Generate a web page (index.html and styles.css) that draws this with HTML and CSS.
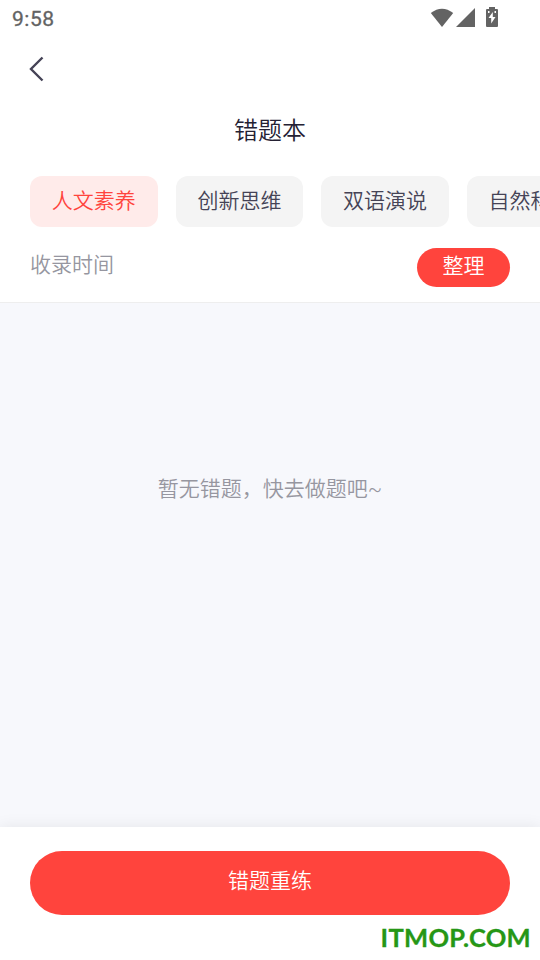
FILE: index.html
```html
<!DOCTYPE html>
<html lang="zh-CN">
<head>
<meta charset="utf-8">
<title>错题本</title>
<link rel="stylesheet" href="styles.css">
</head>
<body>
<div class="app">
  <div class="status">
    <span class="time">9:58</span>
    <div class="status-icons">
      <svg width="24" height="20" viewBox="0 0 24 20"><path d="M12 19 .8 5Q12-3.600 23.200 5Z"/></svg>
      <svg width="20" height="20" viewBox="0 0 20 20"><path d="M0 19 19 0V19Z"/></svg>
      <svg class="battery" width="12" height="20" viewBox="0 0 12 20"><path fill-rule="evenodd" d="M3 0h6v2H11q1 0 1 1v16q0 1-1 1H1q-1 0-1-1V3q0-1 1-1h2ZM2 4v2h1.500V4ZM8.500 4v2H10V4ZM6.800 5 2.500 11h2.700v5.500L9.500 10H6.800Z"/></svg>
    </div>
  </div>
  <nav class="nav"><svg width="16" height="26" viewBox="0 0 16 26"><path d="M14.500 1.500 3 13 14.500 24.500"/></svg></nav>
  <h1 class="title">错题本</h1>
  <div class="tabs">
    <div class="tab active">人文素养</div>
    <div class="tab">创新思维</div>
    <div class="tab">双语演说</div>
    <div class="tab">自然科学</div>
  </div>
  <div class="filter"><span class="sort">收录时间</span><button class="organize">整理</button></div>
  <main class="empty">暂无错题，快去做题吧<span class="tilde">~</span></main>
  <footer class="footer"><button class="retry">错题重练</button><div class="mark">ITMOP.COM</div></footer>
</div>
</body>
</html>
```
FILE: styles.css
```css
* { box-sizing: border-box; }
body { margin: 0; font-family: "Noto Sans CJK SC", sans-serif; font-size: 21px; font-weight: 350; }
.app { width: 540px; height: 960px; display: flex; flex-direction: column; overflow: hidden; background: #fff; }
.status { height: 38px; padding: 0 42px 0 12px; display: flex; justify-content: space-between; align-items: center; flex: none; }
.time { font: 400 21px Roboto, sans-serif; letter-spacing: .5px; color: #636363; -webkit-text-stroke: .3px #636363; }
.status-icons { display: flex; align-items: center; fill: #636363; gap: 2px; margin-top: -3px; }
.battery { margin-left: 8px; position: relative; top: -1px; }
.nav { height: 62px; padding: 18px 0 0 28px; flex: none; }
.nav svg { display: block; fill: none; stroke: #454356; stroke-width: 2.4; }
.title { margin: 0; height: 76px; line-height: 58px; text-align: center; font-size: 24px; font-weight: 350; color: #242133; flex: none; }
.tabs { display: flex; gap: 18px; padding-left: 30px; height: 51px; flex: none; }
.tab { width: 127.6px; flex: none; border-radius: 12px; background: #f4f4f4; color: #454356; text-align: center; line-height: 46px; }
.tab.active { background: #ffebea; color: #ff443d; }
.filter { height: 76px; padding: 21px 30px 0; display: flex; justify-content: space-between; border-bottom: 1px solid #eee; flex: none; }
.sort { line-height: 31px; color: #9696a0; }
button { border: 0; padding: 0; font: inherit; color: #fff; background: #ff443d; }
.organize { width: 93px; height: 39px; border-radius: 20px; line-height: 32px; padding-bottom: 7px; }
.empty { flex: 1; background: #f7f8fc; color: #9696a0; text-align: center; padding-top: 168px; line-height: 32px; }
.tilde { font-family: Roboto, sans-serif; }
.footer { height: 133px; padding: 24px 30px 0; background: #fff; box-shadow: 0 0 15px rgba(0,0,0,.08); flex: none; position: relative; }
.retry { display: block; width: 480px; height: 64px; border-radius: 32px; padding-bottom: 8px; }
.mark { margin: 4px -21px 0 0; text-align: right; font: 700 25.5px/36px Lato, sans-serif; color: #269716; letter-spacing: .3px; -webkit-text-stroke: .3px #269716; }
```
